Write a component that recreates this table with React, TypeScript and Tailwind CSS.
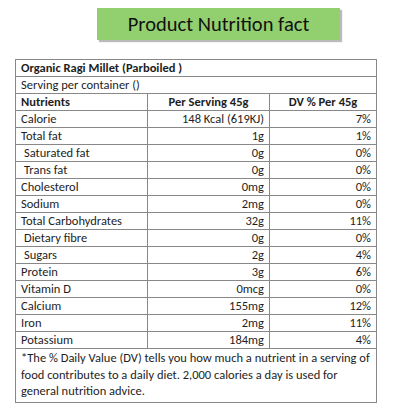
import React from "react";

const rows: [string, string, string, boolean?][] = [
  ["Calorie", "148 Kcal (619KJ)", "7%"],
  ["Total fat", "1g", "1%"],
  ["Saturated fat", "0g", "0%", true],
  ["Trans fat", "0g", "0%", true],
  ["Cholesterol", "0mg", "0%"],
  ["Sodium", "2mg", "0%"],
  ["Total Carbohydrates", "32g", "11%"],
  ["Dietary fibre", "0g", "0%", true],
  ["Sugars", "2g", "4%", true],
  ["Protein", "3g", "6%"],
  ["Vitamin D", "0mcg", "0%"],
  ["Calcium", "155mg", "12%"],
  ["Iron", "2mg", "11%"],
  ["Potassium", "184mg", "4%"],
];

export default function App() {
  return (
    <div
      className="w-[416px] h-[416px] bg-white flex flex-col text-[#1e1e1e]"
      style={{ fontFamily: "Carlito, Lato, sans-serif" }}
    >
      <div className="flex pl-[97px] pt-[8px]">
        <div className="w-[243px] h-[32px] bg-[#92d06f] flex items-center justify-center text-[20.5px] text-[#111] shadow-[2px_2px_1px_#bbb]">
          Product Nutrition fact
        </div>
      </div>
      <div className="pl-[15px] pt-[19px]">
        <table className="border-collapse w-[361px] text-[12.5px] leading-[16px] table-fixed">
          <colgroup>
            <col className="w-[132px]" />
            <col className="w-[122px]" />
            <col className="w-[107px]" />
          </colgroup>
          <tbody>
            <tr className="h-[17px]">
              <td colSpan={3} className="border border-[#888] px-[5px] py-0 font-bold">
                Organic Ragi Millet (Parboiled )
              </td>
            </tr>
            <tr className="h-[17px]">
              <td colSpan={3} className="border border-[#888] px-[5px] py-0">
                Serving per container ()
              </td>
            </tr>
            <tr className="h-[17px] font-bold">
              <td className="border border-[#888] px-[5px] py-0">Nutrients</td>
              <td className="border border-[#888] px-[5px] py-0 text-center">Per Serving 45g</td>
              <td className="border border-[#888] px-[5px] py-0 text-center">DV % Per 45g</td>
            </tr>
            {rows.map(([n, v, d, ind]) => (
              <tr key={n} className="h-[17px]">
                <td className={`border border-[#888] py-0 pr-[5px] ${ind ? "pl-[8px]" : "pl-[5px]"}`}>{n}</td>
                <td className="border border-[#888] px-[5px] py-0 text-right">{v}</td>
                <td className="border border-[#888] px-[5px] py-0 text-right">{d}</td>
              </tr>
            ))}
            <tr>
              <td colSpan={3} className="border border-[#888] px-[5px] pt-[1px] pb-[2px] leading-[16.5px] whitespace-nowrap overflow-hidden">
                *The % Daily Value (DV) tells you how much a nutrient in a serving of
                <br />
                food contributes to a daily diet. 2,000 calories a day is used for
                <br />
                general nutrition advice.
              </td>
            </tr>
          </tbody>
        </table>
      </div>
    </div>
  );
}
